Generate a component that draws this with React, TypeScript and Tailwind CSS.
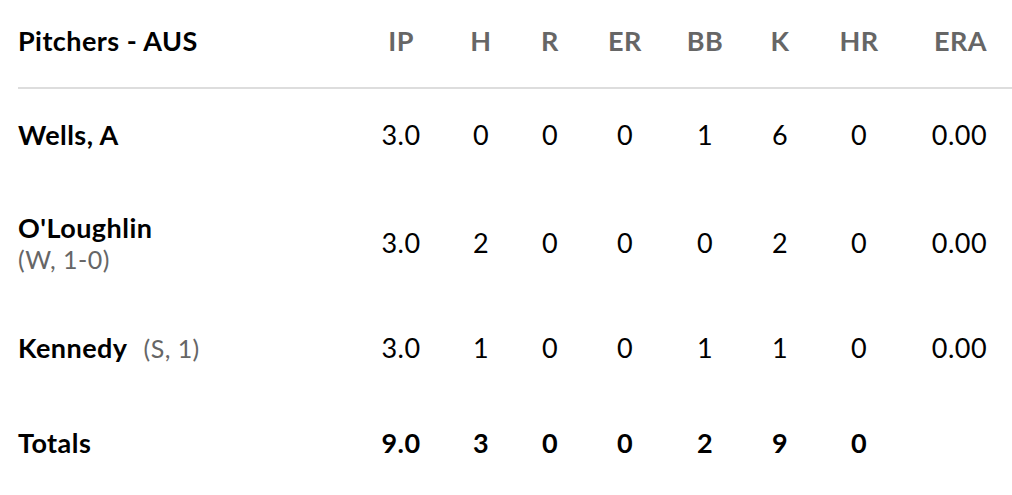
import React from "react";

const cols = ["IP", "H", "R", "ER", "BB", "K", "HR", "ERA"];
const widths = ["w-[80px]", "w-[80px]", "w-[58px]", "w-[92px]", "w-[68px]", "w-[82px]", "w-[76px]", "w-[115px]"];

type Row = { name: string; note?: string; inline?: boolean; stats: string[]; h: string; bold?: boolean };

const rows: Row[] = [
  { name: "Wells, A", stats: ["3.0", "0", "0", "0", "1", "6", "0", "0.00"], h: "h-[92px]" },
  { name: "O'Loughlin", note: "(W, 1-0)", stats: ["3.0", "2", "0", "0", "0", "2", "0", "0.00"], h: "h-[124px]" },
  { name: "Kennedy", note: "(S, 1)", inline: true, stats: ["3.0", "1", "0", "0", "1", "1", "0", "0.00"], h: "h-[86px]" },
  { name: "Totals", stats: ["9.0", "3", "0", "0", "2", "9", "0", ""], h: "h-[104px]", bold: true },
];

function Cell({ i, children, className }: { i: number; children: React.ReactNode; className: string }) {
  const align = i === 7 ? "text-right pr-[25px]" : "text-center";
  return <div className={`${widths[i]} shrink-0 whitespace-nowrap ${align} ${className}`}>{children}</div>;
}

export default function App() {
  return (
    <div className="w-[1012px] h-[495px] overflow-hidden bg-white text-black font-['Lato',sans-serif] tracking-[0.45px]">
      <div className="flex items-center h-[85px] pb-[2px] pl-[18px]">
        <div className="w-[343px] shrink-0 text-[27px] font-bold">Pitchers - AUS</div>
        {cols.map((c, i) => (
          <Cell key={c} i={i} className="text-[27px] font-bold text-[#666666]">
            {c}
          </Cell>
        ))}
      </div>
      <div className="ml-[18px] mt-[2px] h-[2px] bg-[#dddddd]" />
      {rows.map((r) => (
        <div key={r.name} className={`flex items-center pl-[18px] ${r.h}`}>
          <div className="w-[343px] shrink-0">
            {r.inline ? (
              <div className="flex items-baseline">
                <span className="text-[27px] font-bold">{r.name}</span>
                <span className="ml-[16px] text-[25px] text-[#666666]">{r.note}</span>
              </div>
            ) : (
              <>
                <div className="text-[27px] font-bold leading-[32px]">{r.name}</div>
                {r.note && <div className="text-[25px] leading-[30px] text-[#666666]">{r.note}</div>}
              </>
            )}
          </div>
          {r.stats.map((s, i) => (
            <Cell key={i} i={i} className={`text-[27px] ${r.bold ? "font-bold" : ""}`}>
              {s}
            </Cell>
          ))}
        </div>
      ))}
    </div>
  );
}
